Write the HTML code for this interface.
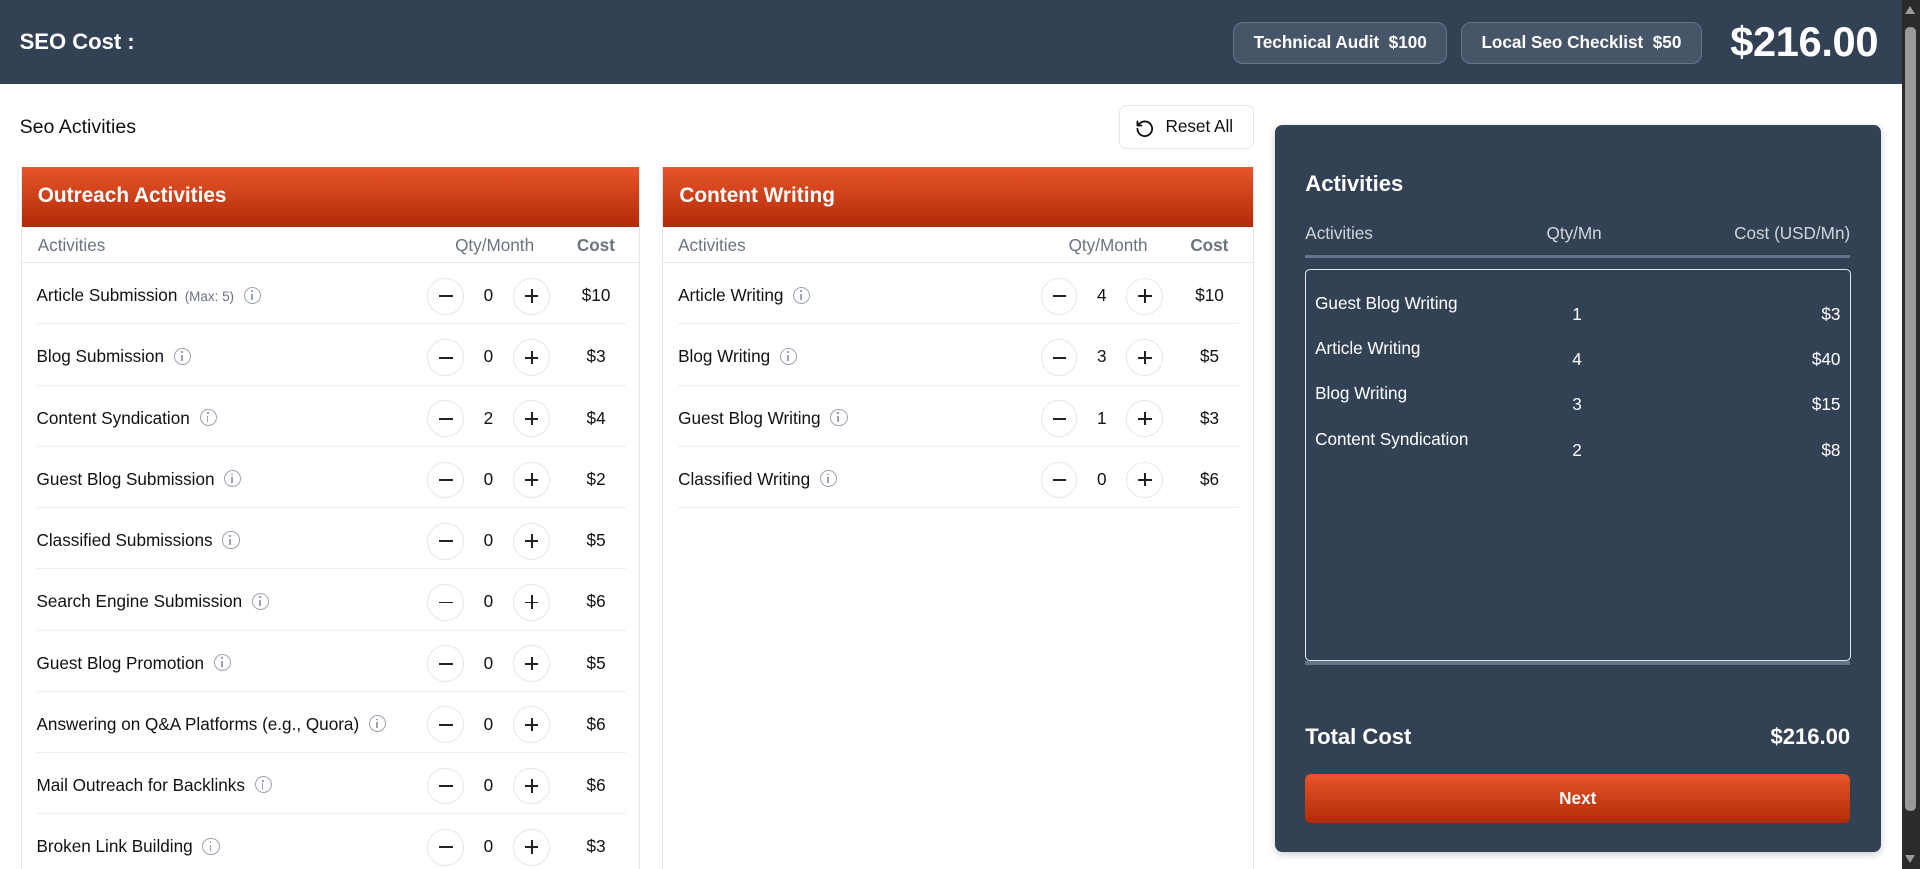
<!DOCTYPE html>
<html><head><meta charset="utf-8"><style>
*{box-sizing:border-box;margin:0;padding:0}
html,body{width:1920px;height:869px;overflow:hidden;background:#fff}
#w{zoom:1.22449;width:1568px;height:710px;position:relative;font-family:"Liberation Sans",Arial,sans-serif;color:#111;overflow:hidden}
.hdr{position:absolute;left:0;top:0;width:1553px;height:69px;background:#334155}
.badge{position:absolute;top:18px;height:34px;background:#475569;border:1px solid #64748b;border-radius:8px;color:#fff;font-size:14px;font-weight:bold;line-height:32px;text-align:center}
.abs{position:absolute}
.panel{position:absolute;top:136px;height:600px;border:1px solid #e5e7eb;border-top:none;background:#fff}
.ph{height:49px;background:linear-gradient(#e8552b,#b12b07);color:#fff;font-weight:bold;font-size:17px;line-height:48px;padding-left:13px}
.ch{position:relative;height:30px;border-bottom:1px solid #e5e7eb;font-size:14px;color:#6b7280;line-height:30px}
.row{position:relative;height:50px;margin:0 11px 0 12px;border-bottom:1px solid #ececec;font-size:14px;line-height:53px}
.nm{position:absolute;left:0;top:0;white-space:nowrap}
.info{display:inline-block;width:14px;height:14px;border:1.3px solid #9ca3af;border-radius:50%;vertical-align:-2px;margin-left:8px;position:relative}
.info:after{content:"";position:absolute;left:5px;top:5px;width:1.3px;height:5px;background:#9ca3af}
.info:before{content:"";position:absolute;left:5px;top:2px;width:1.5px;height:1.5px;background:#9ca3af}
.btn{position:absolute;top:12px;width:30px;height:30px;border:1px solid #e5e7eb;border-radius:50%}
.btn:before{content:"";position:absolute;left:9px;top:13.5px;width:11px;height:1.5px;background:#222}
.btn.p:after{content:"";position:absolute;left:13.8px;top:8.5px;width:1.5px;height:11px;background:#222}
.v{position:absolute;width:30px;text-align:center}
.c{position:absolute;width:40px;text-align:center}
.max{font-size:11px;color:#6b7280;margin-left:6px}
.rp{position:absolute;left:1041px;top:102px;width:495px;height:594px;background:#334155;border-radius:6px;color:#fff;box-shadow:0 2px 6px rgba(0,0,0,.2)}
</style></head><body><div id="w">
<div class="hdr">
<div class="abs" style="left:16px;top:24px;color:#fff;font-weight:bold;font-size:18px">SEO Cost :</div>
<div class="badge" style="left:1007px;width:175px">Technical Audit&nbsp; $100</div>
<div class="badge" style="left:1193px;width:197px">Local Seo Checklist&nbsp; $50</div>
<div class="abs" style="left:1413px;top:15px;color:#fff;font-weight:bold;font-size:34px;letter-spacing:-0.3px">$216.00</div>
</div>
<div class="abs" style="left:1553px;top:0;width:15px;height:710px;background:#2b2b2b"></div>
<div class="abs" style="left:1556px;top:22px;width:9px;height:640px;background:#9a9a9a;border-radius:4px"></div>
<div class="abs" style="left:1556px;top:5px;width:0;height:0;border-left:4.5px solid transparent;border-right:4.5px solid transparent;border-bottom:7px solid #9a9a9a"></div>
<div class="abs" style="left:1556px;top:698px;width:0;height:0;border-left:4.5px solid transparent;border-right:4.5px solid transparent;border-top:7px solid #9a9a9a"></div>

<div class="abs" style="left:16px;top:95px;font-size:16px">Seo Activities</div>
<div class="abs" style="left:914px;top:86px;width:110px;height:36px;border:1px solid #e5e7eb;border-radius:6px;font-size:14px;line-height:34px;padding-left:37px">
<svg class="abs" style="left:12px;top:10px" width="16" height="16" viewBox="0 0 24 24" fill="none" stroke="#111" stroke-width="2.2" stroke-linecap="round" stroke-linejoin="round"><path d="M3 12a9 9 0 1 0 3-6.7L3 8"/><path d="M3 3v5h5"/></svg>Reset All</div>

<div class="panel" style="left:17px;width:506px">
<div class="ph">Outreach Activities</div>
<div class="ch"><span class="abs" style="left:13px">Activities</span><span class="abs" style="right:86px">Qty/Month</span><span class="abs" style="right:20px;font-weight:bold">Cost</span></div>
<div class="row"><span class="nm">Article Submission<span class="max">(Max: 5)</span><i class="info"></i></span><span class="btn" style="left:319px"></span><span class="v" style="left:354px">0</span><span class="btn p" style="left:389px"></span><span class="c" style="left:437px">$10</span></div>
<div class="row"><span class="nm">Blog Submission<i class="info"></i></span><span class="btn" style="left:319px"></span><span class="v" style="left:354px">0</span><span class="btn p" style="left:389px"></span><span class="c" style="left:437px">$3</span></div>
<div class="row"><span class="nm">Content Syndication<i class="info"></i></span><span class="btn" style="left:319px"></span><span class="v" style="left:354px">2</span><span class="btn p" style="left:389px"></span><span class="c" style="left:437px">$4</span></div>
<div class="row"><span class="nm">Guest Blog Submission<i class="info"></i></span><span class="btn" style="left:319px"></span><span class="v" style="left:354px">0</span><span class="btn p" style="left:389px"></span><span class="c" style="left:437px">$2</span></div>
<div class="row"><span class="nm">Classified Submissions<i class="info"></i></span><span class="btn" style="left:319px"></span><span class="v" style="left:354px">0</span><span class="btn p" style="left:389px"></span><span class="c" style="left:437px">$5</span></div>
<div class="row"><span class="nm">Search Engine Submission<i class="info"></i></span><span class="btn" style="left:319px"></span><span class="v" style="left:354px">0</span><span class="btn p" style="left:389px"></span><span class="c" style="left:437px">$6</span></div>
<div class="row"><span class="nm">Guest Blog Promotion<i class="info"></i></span><span class="btn" style="left:319px"></span><span class="v" style="left:354px">0</span><span class="btn p" style="left:389px"></span><span class="c" style="left:437px">$5</span></div>
<div class="row"><span class="nm">Answering on Q&amp;A Platforms (e.g., Quora)<i class="info"></i></span><span class="btn" style="left:319px"></span><span class="v" style="left:354px">0</span><span class="btn p" style="left:389px"></span><span class="c" style="left:437px">$6</span></div>
<div class="row"><span class="nm">Mail Outreach for Backlinks<i class="info"></i></span><span class="btn" style="left:319px"></span><span class="v" style="left:354px">0</span><span class="btn p" style="left:389px"></span><span class="c" style="left:437px">$6</span></div>
<div class="row"><span class="nm">Broken Link Building<i class="info"></i></span><span class="btn" style="left:319px"></span><span class="v" style="left:354px">0</span><span class="btn p" style="left:389px"></span><span class="c" style="left:437px">$3</span></div>
</div>

<div class="panel" style="left:541px;width:483px">
<div class="ph">Content Writing</div>
<div class="ch"><span class="abs" style="left:12px">Activities</span><span class="abs" style="right:86px">Qty/Month</span><span class="abs" style="right:20px;font-weight:bold">Cost</span></div>
<div class="row"><span class="nm">Article Writing<i class="info"></i></span><span class="btn" style="left:296px"></span><span class="v" style="left:331px">4</span><span class="btn p" style="left:366px"></span><span class="c" style="left:414px">$10</span></div>
<div class="row"><span class="nm">Blog Writing<i class="info"></i></span><span class="btn" style="left:296px"></span><span class="v" style="left:331px">3</span><span class="btn p" style="left:366px"></span><span class="c" style="left:414px">$5</span></div>
<div class="row"><span class="nm">Guest Blog Writing<i class="info"></i></span><span class="btn" style="left:296px"></span><span class="v" style="left:331px">1</span><span class="btn p" style="left:366px"></span><span class="c" style="left:414px">$3</span></div>
<div class="row"><span class="nm">Classified Writing<i class="info"></i></span><span class="btn" style="left:296px"></span><span class="v" style="left:331px">0</span><span class="btn p" style="left:366px"></span><span class="c" style="left:414px">$6</span></div>
</div>

<div class="rp">
<div class="abs" style="left:25px;top:38px;font-size:18px;font-weight:bold">Activities</div>
<div class="abs" style="left:25px;top:80px;font-size:14px;color:#d1d5db">Activities</div>
<div class="abs" style="left:222px;top:80px;font-size:14px;color:#d1d5db">Qty/Mn</div>
<div class="abs" style="right:25px;top:80px;font-size:14px;color:#d1d5db">Cost (USD/Mn)</div>
<div class="abs" style="left:25px;top:106px;width:445px;height:3px;background:#64748b"></div>
<div class="abs" style="left:25px;top:118px;width:446px;height:320px;border:1px solid #e5e7eb;border-radius:4px"></div>
<div class="abs" style="left:25px;top:438px;width:445px;height:3px;background:#64748b"></div>
<div class="abs" style="left:33px;top:137px;font-size:14px">Guest Blog Writing</div><div class="abs" style="left:243px;top:146px;font-size:14px">1</div><div class="abs" style="right:33px;top:146px;font-size:14px">$3</div>
<div class="abs" style="left:33px;top:174px;font-size:14px">Article Writing</div><div class="abs" style="left:243px;top:183px;font-size:14px">4</div><div class="abs" style="right:33px;top:183px;font-size:14px">$40</div>
<div class="abs" style="left:33px;top:211px;font-size:14px">Blog Writing</div><div class="abs" style="left:243px;top:220px;font-size:14px">3</div><div class="abs" style="right:33px;top:220px;font-size:14px">$15</div>
<div class="abs" style="left:33px;top:248px;font-size:14px">Content Syndication</div><div class="abs" style="left:243px;top:257px;font-size:14px">2</div><div class="abs" style="right:33px;top:257px;font-size:14px">$8</div>
<div class="abs" style="left:25px;top:489px;font-size:18px;font-weight:bold">Total Cost</div>
<div class="abs" style="right:25px;top:489px;font-size:18px;font-weight:bold">$216.00</div>
<div class="abs" style="left:25px;top:530px;width:445px;height:40px;border-radius:5px;background:linear-gradient(#e8552b,#b12b07);text-align:center;line-height:40px;font-size:14px;font-weight:bold">Next</div>
</div>
</div></body></html>
